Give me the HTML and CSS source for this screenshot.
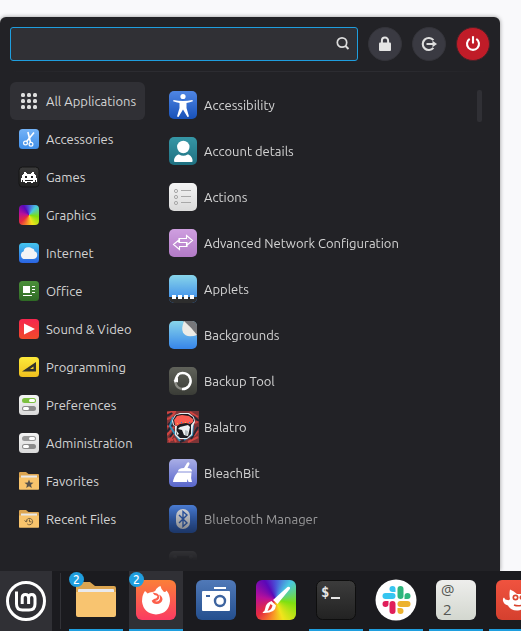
FILE: index.html
```html
<!DOCTYPE html>
<html lang="en">
<head>
<meta charset="utf-8">
<title>Application menu</title>
<link rel="stylesheet" href="styles.css">
</head>
<body>
<svg class="defs" aria-hidden="true">
  <defs>
    <linearGradient id="g-blue" x2="0" y2="1"><stop stop-color="#4f86e4"/><stop offset="1" stop-color="#1851b8"/></linearGradient>
    <linearGradient id="g-sky" x2="0" y2="1"><stop stop-color="#74b3f7"/><stop offset="1" stop-color="#3f8ee8"/></linearGradient>
    <linearGradient id="g-dark" x2="0" y2="1"><stop stop-color="#3c3c3c"/><stop offset="1" stop-color="#222"/></linearGradient>
    <linearGradient id="g-cloud" x2="0" y2="1"><stop stop-color="#45c6ee"/><stop offset="1" stop-color="#2a63e2"/></linearGradient>
    <linearGradient id="g-green" x2="0" y2="1"><stop stop-color="#4b8f3a"/><stop offset="1" stop-color="#2f6a25"/></linearGradient>
    <linearGradient id="g-red" x2="0" y2="1"><stop stop-color="#f6264f"/><stop offset="1" stop-color="#f04a2a"/></linearGradient>
    <linearGradient id="g-yellow" x2="0" y2="1"><stop stop-color="#fdea3a"/><stop offset="1" stop-color="#efbf1e"/></linearGradient>
    <linearGradient id="g-light" x2="0" y2="1"><stop stop-color="#f4f4f4"/><stop offset="1" stop-color="#dadada"/></linearGradient>
    <linearGradient id="g-teal" x2="0" y2="1"><stop stop-color="#3697a6"/><stop offset="1" stop-color="#1f7080"/></linearGradient>
    <linearGradient id="g-purple" x2="0" y2="1"><stop stop-color="#cf9fe0"/><stop offset="1" stop-color="#b27ac6"/></linearGradient>
    <linearGradient id="g-aqua" x2="0" y2="1"><stop stop-color="#88d5ea"/><stop offset="1" stop-color="#3685ea"/></linearGradient>
    <linearGradient id="g-olive" x2="0" y2="1"><stop stop-color="#60625a"/><stop offset="1" stop-color="#3a3c36"/></linearGradient>
    <linearGradient id="g-violet" x2="0" y2="1"><stop stop-color="#a9aee6"/><stop offset="1" stop-color="#5866cb"/></linearGradient>
    <linearGradient id="g-fox" x2="0" y2="1"><stop stop-color="#fb7f38"/><stop offset="1" stop-color="#fb3b62"/></linearGradient>
    <linearGradient id="g-camera" x2="0" y2="1"><stop stop-color="#5079b8"/><stop offset="1" stop-color="#244f8e"/></linearGradient>
    <linearGradient id="g-note" x2="0" y2="1"><stop stop-color="#eeeeec"/><stop offset="1" stop-color="#d3d7cf"/></linearGradient>
    <linearGradient id="g-cat" x2="0" y2="1"><stop stop-color="#f0533f"/><stop offset="1" stop-color="#d5402e"/></linearGradient>
  </defs>
</svg>

<main class="desktop">
  <section class="menu" aria-label="Menu">
    <header class="menu-head">
      <div class="search">
        <input class="search-input" type="text" aria-label="Search">
        <svg class="search-icon" viewBox="0 0 16 16"><circle cx="7" cy="6.500" r="4.700" fill="none" stroke="#dcdcdc" stroke-width="1.700"/><path d="M10.500 10l3 3" stroke="#dcdcdc" stroke-width="2"/></svg>
      </div>
      <button class="session" aria-label="Lock screen"><svg viewBox="0 0 16 16"><path d="M4.900 7V4.600a3.100 3.100 0 0 1 6.200 0V7" fill="none" stroke="#e4e4e4" stroke-width="2"/><rect x="2" y="6.600" width="12" height="8.400" rx="1" fill="#e4e4e4"/></svg></button>
      <button class="session" aria-label="Log out"><svg viewBox="0 0 16 16"><path d="M12.400 4.200A6 6 0 1 0 12.400 11.800" fill="none" stroke="#dedede" stroke-width="2.100"/><path d="M5.500 7h6V4.800L16 8l-4.500 3.200V9h-6z" fill="#dedede"/></svg></button>
      <button class="session session-power" aria-label="Shut down"><svg viewBox="0 0 16 16"><path d="M4.700 2.900a6 6 0 1 0 6.600 0" fill="none" stroke="#fff" stroke-width="2.100"/><path d="M8 .2v7.300" stroke="#fff" stroke-width="2.100"/></svg></button>
    </header>
    <hr class="rule">
    <div class="menu-body">
      <nav class="categories" aria-label="Categories">
        <button class="category is-active"><svg class="icon-s" viewBox="0 0 22 22" fill="#dedede"><rect x="3" y="3" width="4" height="4" rx="1.500"/><rect x="9" y="3" width="4" height="4" rx="1.500"/><rect x="15" y="3" width="4" height="4" rx="1.500"/><rect x="3" y="9" width="4" height="4" rx="1.500"/><rect x="9" y="9" width="4" height="4" rx="1.500"/><rect x="15" y="9" width="4" height="4" rx="1.500"/><rect x="3" y="15" width="4" height="4" rx="1.500"/><rect x="9" y="15" width="4" height="4" rx="1.500"/><rect x="15" y="15" width="4" height="4" rx="1.500"/></svg>All Applications</button>
        <button class="category"><svg class="icon-s" viewBox="0 0 22 22"><rect x="1" y="1" width="20" height="20" rx="3.500" fill="url(#g-sky)"/><g fill="none" stroke="#fff" stroke-width="1.200"><circle cx="7.500" cy="15" r="1.900"/><circle cx="13" cy="16.200" r="1.900"/><path d="M8.600 13.500L16 4.500" stroke-width="1.600"/><path d="M12.500 14.400L9.900 4" stroke-width="1.600"/></g></svg>Accessories</button>
        <button class="category"><svg class="icon-s" viewBox="0 0 22 22"><rect x="1" y="1" width="20" height="20" rx="3.500" fill="url(#g-dark)" stroke="#151515"/><path fill="#fff" shape-rendering="crispEdges" d="M6 6h2v1h1v1h4V7h1V6h2v2h1v1h1v3h1v4h-1v-2h-1v2h-2v1h-2v-1h-4v1H7v-1H5v-2H4v2H3v-4h1V9h1V8h1z"/><path fill="#222" shape-rendering="crispEdges" d="M7 10h2v2H7zM13 10h2v2h-2zM7 14h8v1H7z"/></svg>Games</button>
        <button class="category"><span class="icon-s"><span class="spectrum"></span></span>Graphics</button>
        <button class="category"><svg class="icon-s" viewBox="0 0 22 22"><rect x="1" y="1" width="20" height="20" rx="3.500" fill="url(#g-cloud)"/><path fill="#f3f3f5" d="M7 17a4 4 0 0 1-1.300-7.800A4.500 4.500 0 0 1 10 5.200c2 0 3 .3 4.100 1.300 1.600 0 2.400 1.300 2.300 2.700 2 .4 2.800 2 2.800 3.800 0 2.500-1.800 4-4.200 4z"/></svg>Internet</button>
        <button class="category"><svg class="icon-s" viewBox="0 0 22 22"><rect x="1" y="1" width="20" height="20" rx="3.500" fill="url(#g-green)"/><path fill="#fff" shape-rendering="crispEdges" d="M5 6h7v7H5zM14 6h3v1h-3zM14 9h3v1h-3zM14 12h3v1h-3zM5 15h9v1H5z"/></svg>Office</button>
        <button class="category"><svg class="icon-s" viewBox="0 0 22 22"><rect x="1" y="1" width="20" height="20" rx="3.500" fill="url(#g-red)"/><path fill="#fff" d="M6 5.500v11L17 11z"/></svg>Sound &amp; Video</button>
        <button class="category"><svg class="icon-s" viewBox="0 0 22 22"><rect x="1" y="1" width="20" height="20" rx="3.500" fill="url(#g-yellow)"/><path fill="#33332c" fill-rule="evenodd" d="M4 15.500L18 6v9.500zM12 13h3.500v-2.600z"/></svg>Programming</button>
        <button class="category"><svg class="icon-s" viewBox="0 0 22 22"><rect x="1" y="1" width="20" height="20" rx="3.500" fill="url(#g-light)"/><rect x="4" y="4" width="14" height="5" rx="2.500" fill="#7cc040"/><rect x="11" y="5" width="6" height="3" rx="1.500" fill="#fff"/><rect x="4" y="12" width="14" height="5" rx="2.500" fill="#8b8b8b"/><rect x="5" y="13" width="6" height="3" rx="1.500" fill="#fff"/></svg>Preferences</button>
        <button class="category"><svg class="icon-s" viewBox="0 0 22 22"><rect x="1" y="1" width="20" height="20" rx="3.500" fill="url(#g-light)"/><rect x="4" y="4" width="14" height="5" rx="2.500" fill="#999"/><rect x="11" y="5" width="6" height="3" rx="1.500" fill="#fff"/><rect x="4" y="12" width="14" height="5" rx="2.500" fill="#8b8b8b"/><rect x="5" y="13" width="6" height="3" rx="1.500" fill="#fff"/></svg>Administration</button>
        <button class="category"><svg class="icon-s" viewBox="0 0 22 22"><path fill="#dca550" d="M1 3q0-1 1-1h6l2.500 2H20q1 0 1 1v8H1z"/><path fill="#e8e8e8" d="M3 5.500h16V8H3z"/><path fill="#f8c46c" d="M1 7.500h20V19q0 .7-.7.7H1.700Q1 19.700 1 19z"/><path fill="#57534c" d="M11 9.500l1.200 3 3.300.2-2.500 2 .8 3.200-2.800-1.700-2.800 1.700.8-3.200-2.500-2 3.300-.2z"/></svg>Favorites</button>
        <button class="category"><svg class="icon-s" viewBox="0 0 22 22"><path fill="#dca550" d="M1 3q0-1 1-1h6l2.500 2H20q1 0 1 1v8H1z"/><path fill="#e8e8e8" d="M3 5.500h16V8H3z"/><path fill="#f8c46c" d="M1 7.500h20V19q0 .7-.7.7H1.700Q1 19.700 1 19z"/><path fill="none" stroke="#79623c" d="M8.200 13.500a3.200 3.200 0 1 1 1 2.400M6.500 12.500l1.700 1.500 1.500-1.500M11.500 11.500v2.300h2"/></svg>Recent Files</button>
      </nav>

      <div class="apps">
        <button class="app"><svg class="icon-m" viewBox="0 0 32 32"><rect x="2" y="2" width="28" height="28" rx="5" fill="url(#g-blue)"/><circle cx="16" cy="7.500" r="2.600" fill="#fff"/><path fill="#fff" d="M6.500 11q9.500 2 19 0l.4 1.300q-3 1.200-6.400 1.700v5l2.500 8.500-1.500.5L16 20.500 11.500 28l-1.500-.5 2.500-8.500v-5q-3.400-.5-6.400-1.700z"/></svg>Accessibility</button>
        <button class="app"><svg class="icon-m" viewBox="0 0 32 32"><rect x="2" y="2" width="28" height="28" rx="5" fill="url(#g-teal)"/><circle cx="16.300" cy="12" r="6.200" fill="#fff"/><path fill="#fff" d="M7 26c0-4 3-6.500 5-6.500q4.300 2.600 8.600 0c2 0 5 2.500 5 6.500q0 1-1 1H8q-1 0-1-1z"/></svg>Account details</button>
        <button class="app"><svg class="icon-m" viewBox="0 0 32 32"><rect x="2" y="2" width="28" height="28" rx="5" fill="url(#g-light)"/><g fill="none" stroke="#a8a8a8"><circle cx="9" cy="10" r="1.600"/><circle cx="9" cy="16" r="1.600"/><circle cx="9" cy="22" r="1.600"/><path d="M14 9.500h10M14 15.500h10M14 21.500h10"/></g></svg>Actions</button>
        <button class="app"><svg class="icon-m" viewBox="0 0 32 32"><rect x="2" y="2" width="28" height="28" rx="5" fill="url(#g-purple)"/><path fill="none" stroke="#fff" stroke-width="1.100" d="M6.500 17.500l6-5v3h7.500v4h-7.500v3zM25.500 13.500l-6-5v3H12v4h7.500v3z"/></svg>Advanced Network Configuration</button>
        <button class="app"><svg class="icon-m" viewBox="0 0 32 32"><rect x="2" y="2" width="28" height="28" rx="5" fill="url(#g-aqua)"/><path fill="#2d2d2d" d="M2 24h28v1a5 5 0 0 1-5 5H7a5 5 0 0 1-5-5z"/><path fill="#fff" shape-rendering="crispEdges" d="M5 22h4v4H5zM11 22h4v4h-4zM17 22h4v4h-4zM23 22h4v4h-4z"/></svg>Applets</button>
        <button class="app"><svg class="icon-m" viewBox="0 0 32 32"><rect x="2" y="2" width="28" height="28" rx="5" fill="url(#g-aqua)"/><path fill="#77777a" d="M16 2h9a5 5 0 0 1 5 5v10z"/><path fill="#edebe6" d="M17 2q-3 8-1 11.500 2 3.500 7 3.700 4 0 7-1.200Q25 9 17 2z"/></svg>Backgrounds</button>
        <button class="app"><svg class="icon-m" viewBox="0 0 32 32"><rect x="2" y="2" width="28" height="28" rx="5" fill="url(#g-olive)"/><path fill="none" stroke="#fff" stroke-width="2.400" d="M11 9.500A8 8 0 1 1 15 24"/><path fill="none" stroke="#8b8c85" stroke-width="2.400" d="M15 24a8 8 0 0 1-6.500-6"/><path fill="none" stroke="#fff" stroke-width="2.400" d="M8.300 17.500q0-4.500 3-8"/><path fill="#fff" d="M6.500 15.500l4.500-3v5z"/></svg>Backup Tool</button>
        <button class="app"><svg class="icon-m" viewBox="0 0 32 32"><path fill="#7d3436" d="M0 0h32v32H0z"/><path fill="none" stroke="#d04440" stroke-width="2" d="M0 2l9-2M0 8q5-1 8-7M0 16l5-4M0 24l7-8M2 31l5-9M9 31l-2-4M23 1l8 5M28 12l4-2M27 25l4-5M21 31l10-5M1 28l5 1"/><path fill="none" stroke="#232733" stroke-width="2" d="M0 5l5-3M1 14l6-6M0 21l7-9M3 26l4-5M13 31l5-2M26 5l6 5M24 28l7-12"/><path fill="none" stroke="#328db5" stroke-width="2" d="M6 6l-3 9 5 8 5 7M26 14l-1 10-8 5"/><path fill="#e9edf0" d="M5 10l3-6 5-2h9l5 4 1 5-2 4-1 9-5 4h-8l-4-4V15l-2-1z"/><path fill="#1b1b20" d="M6 9l3-5 5-1h7l5 3 1 4-3 4 0 9-4 4h-7l-4-4 1-8-3-1z"/><path fill="#fa5b51" d="M7 9l3-4 5-1 7 1 4 3v3l-3 2-4-1-6 1-3 2-2-1z"/><path fill="#eef0f1" d="M13 16l8-2 2 2-2 9-4-1-2-5-4-1zM9 19l3 4-2 1z"/><path fill="#b4bcc0" d="M18 19l3 1-1 5-2-1z"/><path fill="#f4ba40" d="M10 12h1v1h-1zM18 11h1v1h-1z"/><path fill="#258bd0" d="M14 11h1v1h-1zM22 11h1v1h-1z"/></svg>Balatro</button>
        <button class="app"><svg class="icon-m" viewBox="0 0 32 32"><rect x="2" y="2" width="28" height="28" rx="5" fill="url(#g-violet)"/><path fill="#fff" d="M17 11l3-5q1-1.300 2-.5t.3 2L20.500 11q4.500 0 4.500 3.500H11Q11 11 17 11zM10.500 15.500h14q-1 5.500.5 9.500h-3.500l-1-3-.5 3H6q.5-5 4.500-9.500z"/></svg>BleachBit</button>
        <button class="app"><svg class="icon-m" viewBox="0 0 32 32"><rect x="2" y="2" width="28" height="28" rx="5" fill="url(#g-blue)"/><rect x="9" y="6" width="14" height="20" rx="7" fill="#eef0f4"/><path fill="none" stroke="#2b5fbe" stroke-width="1.400" d="M12 12l8 8-4 3.500v-15l4 3.500-8 8"/></svg>Bluetooth Manager</button>
        <button class="app" aria-label="Next application"><svg class="icon-m" viewBox="0 0 32 32"><rect x="2" y="2" width="28" height="28" rx="5" fill="#858585"/><path fill="#4a4a4a" d="M6 7h20v4H6z"/><circle cx="8" cy="8" r="2" fill="#aaa"/><circle cx="24" cy="8" r="2" fill="#aaa"/></svg></button>
      </div>
      <div class="scrollbar"></div>
    </div>
  </section>

  <footer class="panel">
    <button class="start" aria-label="Menu"><svg viewBox="0 0 40 40" fill="none" stroke="#fff"><circle cx="20" cy="20" r="18.500" stroke-width="3"/><path stroke-width="3" d="M10.500 10.500V23q0 6 6 6H23q6 0 6-6v-5.500q0-4-3.200-4T22.600 17v6M22.600 17q0-3.500-3.200-3.500T16.200 17v6"/></svg></button>
    <div class="divider"></div>
    <div class="tasks">
      <button class="task is-open" aria-label="Files"><svg viewBox="0 0 40 40"><path fill="#dca550" d="M0 4q0-2 2-2h12l5 4h19q2 0 2 2v12H0z"/><path fill="#e9e9ec" d="M2 10q0-1 1-1h34q1 0 1 1v4H2z"/><path fill="#f8c470" d="M0 12h40v23q0 2-2 2H2q-2 0-2-2z"/></svg><span class="badge">2</span></button>
      <button class="task is-open is-focused" aria-label="Firefox"><svg viewBox="0 0 40 40"><rect width="40" height="40" rx="6" fill="url(#g-fox)"/><path fill="#fff" d="M9 11q1.500 1 2.500 2.500 2-1.500 5-1.500 2-.3 3-1.500 1-3 5-4.500.5 3.500 3.500 6 2 0 2.500-1.500Q34 14.500 34 21 33 33.500 20 34.500 7.500 33.500 6 21.500 6 15 9 11z"/><path fill="#fc5f4b" d="M16.500 12.500l2 2.500q2.500.2 3 1.500-.5 2.300-3.500 2.500l-2.300 1.800Q17 24 20.500 24q5-.2 6-4.500 0-3-3.500-5 2 3.500 0 6-2 1.500-4 .5 3-.2 4-2.500 1-3-2-5z"/></svg><span class="badge">2</span></button>
      <button class="task" aria-label="Screenshot"><svg viewBox="0 0 40 40"><rect width="40" height="40" rx="6" fill="url(#g-camera)"/><path fill="#fff" d="M18 7h12v2H18z"/><rect x="6" y="11" width="28" height="20" rx="1" fill="#fff"/><path fill="#3c639f" d="M10 15h4v2h-4z"/><circle cx="24" cy="21" r="5" fill="#fff" stroke="#3c639f" stroke-width="2.400"/></svg></button>
      <button class="task" aria-label="Drawing"><span class="paint"><svg viewBox="0 0 40 40"><path fill="#fff" d="M31.500 7q2-.5 2.500.5.500 1-1 2.500L21.500 24l-4.500-4zM15.500 21l4.500 4.500q-.5 8-13 7.500-.8-.5 0-1 2-1 2.300-4 .5-5 6.200-7z"/><path fill="#e8403c" d="M14.500 24l2 1.500q-1 4.500-5 5.500 1.500-4 3-7z"/></svg></span></button>
      <button class="task is-open" aria-label="Terminal"><svg viewBox="0 0 40 40"><rect x=".5" y=".5" width="39" height="39" rx="6" fill="url(#g-dark)" stroke="#0e0e0e"/><text class="prompt" x="5" y="17">$</text><path fill="#e6e6e6" d="M15 17h9v2h-9z"/></svg></button>
      <button class="task is-open" aria-label="Slack"><svg class="round" viewBox="0 0 40 40"><circle cx="20" cy="20" r="20.500" fill="#fff"/><g fill="#36c5f0"><rect x="6.500" y="13" width="13" height="6" rx="3"/><path d="M19.500 12h-3a3 3 0 1 1 3-3z"/></g><g fill="#2eb67d"><rect x="21.500" y="6" width="6" height="13" rx="3"/><path d="M28.500 19v-3a3 3 0 1 1 3 3z"/></g><g fill="#ecb22e"><rect x="21.500" y="21" width="13" height="6" rx="3"/><path d="M21.500 28h3a3 3 0 1 1-3 3z"/></g><g fill="#e01e5a"><rect x="13.500" y="21" width="6" height="13" rx="3"/><path d="M12.500 21v3a3 3 0 1 1-3-3z"/></g></svg></button>
      <button class="task is-open" aria-label="Characters"><svg viewBox="0 0 40 40"><rect width="40" height="40" rx="6" fill="url(#g-note)"/><text class="glyph" x="5" y="15">@</text><text class="glyph" x="7" y="35">2</text></svg></button>
      <button class="task is-open" aria-label="GIMP"><svg viewBox="0 0 40 40"><rect width="40" height="40" rx="6" fill="url(#g-cat)"/><path fill="#fff" d="M14 9.500q3.500 1 7 4.500h6q3.500-3.500 7-4.500.5 5-1 9 1 10-11 12-7 .5-10-5-4-1-5-4.500-.5-3 1-3.500 1 2.500 3.500 2.500 2 .5 2.500-1-1-5 0-9.500z"/><circle cx="19.500" cy="17.500" r="3" fill="#d9452f"/><circle cx="19.500" cy="17.500" r="1.300" fill="#fff"/><circle cx="26" cy="17.500" r="2.500" fill="#d9452f"/><circle cx="26" cy="17.500" r="1" fill="#fff"/><path fill="none" stroke="#d9452f" stroke-width="1.500" d="M18 25q5 2 11-1"/></svg></button>
    </div>
  </footer>
</main>
</body>
</html>
```

FILE: styles.css
```css
* {
  box-sizing: border-box;
}

body {
  margin: 0;
  background: #f9f9fb;
  color: #d4d4d4;
  font: 13px/20px "Ubuntu", "Noto Sans", sans-serif;
}

button {
  border: 0;
  padding: 0;
  background: none;
  color: inherit;
  font: inherit;
  text-align: left;
}

svg {
  display: block;
}

.defs {
  position: absolute;
  width: 0;
  height: 0;
}

.desktop {
  display: flex;
  flex-direction: column;
  height: 100vh;
  padding-top: 17px;
  overflow: hidden;
}

.menu {
  display: flex;
  flex: 1;
  flex-direction: column;
  min-height: 0;
  margin-right: 21px;
  padding: 10px;
  border-radius: 6px 6px 0 0;
  background: #222226;
  box-shadow: 0 0 4px rgba(0, 0, 0, 0.4);
}

.menu-head {
  display: flex;
  gap: 10px;
}

.search {
  position: relative;
  flex: 1;
}

.search-input {
  display: block;
  width: 100%;
  height: 34px;
  padding: 0 32px 0 10px;
  border: 1px solid #1f9ede;
  border-radius: 3px;
  outline: 0;
  background: #303035;
  color: inherit;
  font: inherit;
}

.search-icon {
  position: absolute;
  top: 9px;
  right: 7px;
  width: 16px;
  height: 16px;
}

.session {
  display: grid;
  place-items: center;
  width: 34px;
  height: 34px;
  border: 1px solid #34343a;
  border-radius: 50%;
  background: #3a3a42;
}

.session svg {
  width: 16px;
  height: 16px;
}

.session-power {
  border-color: #4b2228;
  background: #c01c28;
}

.rule {
  width: 100%;
  height: 1px;
  margin: 10px 0;
  border: 0;
  background: linear-gradient(90deg, transparent, #2c2c31 20%, #2c2c31 80%, transparent);
}

.menu-body {
  display: flex;
  flex: 1;
  min-height: 0;
}

.categories {
  flex: none;
  width: 135px;
}

.category {
  display: flex;
  align-items: center;
  gap: 6px;
  width: 100%;
  height: 38px;
  padding-left: 8px;
  border-radius: 6px;
  white-space: nowrap;
}

.category.is-active {
  background: #303035;
}

.icon-s {
  flex: none;
  width: 22px;
  height: 22px;
}

.spectrum,
.paint {
  display: block;
  background: conic-gradient(from 0deg, #4a55d8, #48c8e0 40deg, #7ee010 100deg, #f2e41c 160deg, #f88a28 195deg, #e52a40 230deg, #b8109a 280deg, #5a08b8 330deg, #4a55d8);
}

.spectrum {
  height: 20px;
  margin: 1px;
  border-radius: 4px;
}

.apps {
  flex: 1;
  min-width: 0;
  margin-left: 20px;
  overflow: hidden;
  mask-image: linear-gradient(#000 calc(100% - 62px), transparent);
}

.app {
  display: flex;
  align-items: center;
  gap: 5px;
  width: 100%;
  height: 46px;
  padding-left: 2px;
  white-space: nowrap;
}

.icon-m {
  flex: none;
  width: 32px;
  height: 32px;
}

.scrollbar {
  width: 5px;
  height: 32px;
  margin: 8px 8px 0;
  border-radius: 2px;
  background: #303035;
}

.panel {
  position: relative;
  display: flex;
  flex: none;
  height: 60px;
  background: #1b1b1f;
}

.start {
  display: grid;
  flex: none;
  place-items: center;
  width: 52px;
  background: #303035;
}

.start svg,
.task svg,
.paint {
  width: 40px;
  height: 40px;
}

.round {
  overflow: visible;
}

.divider {
  flex: none;
  width: 1px;
  margin: 2px 8px;
  background: #323237;
}

.tasks {
  display: flex;
  flex: 1;
  gap: 6px;
  min-width: 0;
  overflow: hidden;
}

.task {
  position: relative;
  display: grid;
  flex: none;
  place-items: center;
  width: 54px;
  border-bottom: 2px solid transparent;
}

.task.is-open {
  border-bottom-color: #1f9ede;
}

.task.is-focused {
  background: #303035;
}

.paint {
  border-radius: 6px;
}

.badge {
  position: absolute;
  top: 1px;
  left: 0;
  width: 15px;
  height: 15px;
  border-radius: 50%;
  background: #1f9ede;
  color: #fff;
  font-size: 12px;
  font-weight: 500;
  line-height: 15px;
  text-align: center;
}

.prompt {
  fill: #e6e6e6;
  font: bold 14px "DejaVu Sans Mono", monospace;
}

.glyph {
  fill: #555753;
  font: 15px "Open Sans", sans-serif;
}
```
